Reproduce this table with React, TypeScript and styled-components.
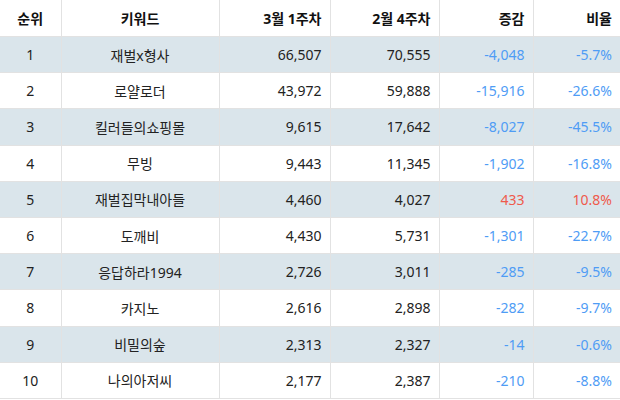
import React from "react";
import styled, { createGlobalStyle } from "styled-components";

const rows = [
  { rank: 1, keyword: "재벌x형사", now: "66,507", prev: "70,555", diff: "-4,048", rate: "-5.7%" },
  { rank: 2, keyword: "로얄로더", now: "43,972", prev: "59,888", diff: "-15,916", rate: "-26.6%" },
  { rank: 3, keyword: "킬러들의쇼핑몰", now: "9,615", prev: "17,642", diff: "-8,027", rate: "-45.5%" },
  { rank: 4, keyword: "무빙", now: "9,443", prev: "11,345", diff: "-1,902", rate: "-16.8%" },
  { rank: 5, keyword: "재벌집막내아들", now: "4,460", prev: "4,027", diff: "433", rate: "10.8%" },
  { rank: 6, keyword: "도깨비", now: "4,430", prev: "5,731", diff: "-1,301", rate: "-22.7%" },
  { rank: 7, keyword: "응답하라1994", now: "2,726", prev: "3,011", diff: "-285", rate: "-9.5%" },
  { rank: 8, keyword: "카지노", now: "2,616", prev: "2,898", diff: "-282", rate: "-9.7%" },
  { rank: 9, keyword: "비밀의숲", now: "2,313", prev: "2,327", diff: "-14", rate: "-0.6%" },
  { rank: 10, keyword: "나의아저씨", now: "2,177", prev: "2,387", diff: "-210", rate: "-8.8%" },
];

const App = () => {
  return (
    <>
      <GlobalStyle />
      <Table>
        <colgroup>
          <col style={{ width: 61 }} />
          <col style={{ width: 158 }} />
          <col style={{ width: 111 }} />
          <col style={{ width: 109 }} />
          <col style={{ width: 94 }} />
          <col style={{ width: 87 }} />
        </colgroup>
        <thead>
          <tr>
            <Th $align="center">순위</Th>
            <Th $align="center">키워드</Th>
            <Th $align="right">3월 1주차</Th>
            <Th $align="right">2월 4주차</Th>
            <Th $align="right">증감</Th>
            <Th $align="right">비율</Th>
          </tr>
        </thead>
        <tbody>
          {rows.map((row) => {
            const up = !row.diff.startsWith("-");
            return (
              <Row key={row.rank} $striped={row.rank % 2 === 1}>
                <Td $align="center">{row.rank}</Td>
                <Td $align="center">{row.keyword}</Td>
                <Td $align="right">{row.now}</Td>
                <Td $align="right">{row.prev}</Td>
                <Td $align="right" $color={up ? "#ef5a4c" : "#4f9cf5"}>
                  {row.diff}
                </Td>
                <Td $align="right" $color={up ? "#ef5a4c" : "#4f9cf5"}>
                  {row.rate}
                </Td>
              </Row>
            );
          })}
        </tbody>
      </Table>
    </>
  );
};

export default App;

const GlobalStyle = createGlobalStyle`
  html, body {
    margin: 0;
    padding: 0;
    background: #fff;
  }
  body {
    font-family: "Noto Sans", "Noto Sans CJK KR", sans-serif;
  }
`;

const Table = styled.table`
  width: 620px;
  border-collapse: collapse;
  table-layout: fixed;

  font-size: 14px;
  color: #222;

  th:first-child,
  td:first-child {
    border-left: none;
  }
  th:last-child,
  td:last-child {
    border-right: none;
  }
`;

const Th = styled.th<{ $align: string }>`
  height: 36px;
  padding: 0 8px;

  text-align: ${({ $align }) => $align};
  font-weight: bold;
  color: #111;

  border: 1px solid #e2e2e2;
  border-top: none;
`;

const Row = styled.tr<{ $striped: boolean }>`
  background-color: ${({ $striped }) => ($striped ? "#dae5eb" : "#fff")};
`;

const Td = styled.td<{ $align: string; $color?: string }>`
  height: 35.2px;
  padding: 0 8px;

  text-align: ${({ $align }) => $align};
  color: ${({ $color }) => $color || "#222"};

  border: 1px solid #e2e2e2;
`;
